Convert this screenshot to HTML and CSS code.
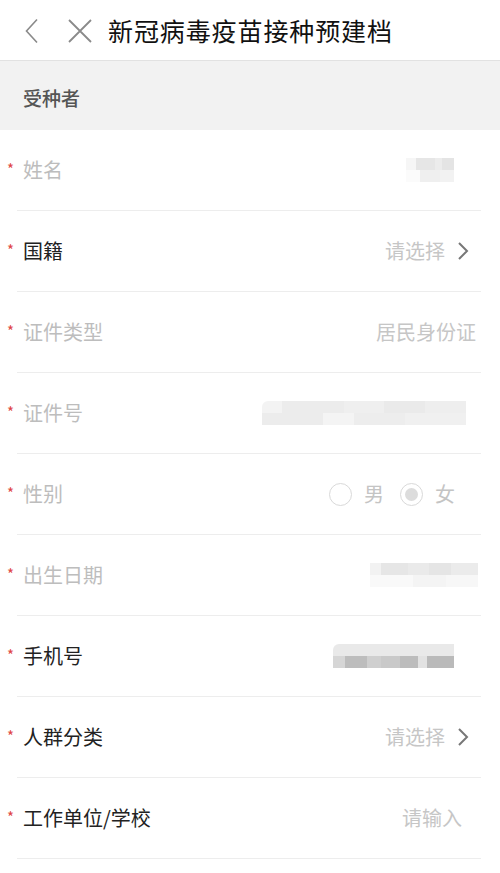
FILE: index.html
```html
<!DOCTYPE html>
<html lang="zh-CN">
<head>
<meta charset="utf-8">
<title>新冠病毒疫苗接种预建档</title>
<link rel="stylesheet" href="styles.css">
</head>
<body>
<header class="topbar">
  <svg class="icon-back" width="16" height="26" viewBox="0 0 16 26"><path d="M13 1.5 L2.5 13 L13 24.5" fill="none" stroke="#8a8a8a" stroke-width="1.6"/></svg>
  <svg class="icon-close" width="26" height="26" viewBox="0 0 26 26"><path d="M2 2 L24 24 M24 2 L2 24" fill="none" stroke="#8a8a8a" stroke-width="1.8"/></svg>
  <h1 class="title">新冠病毒疫苗接种预建档</h1>
</header>
<div class="section">受种者</div>
<div class="form">
  <div class="row">
    <span class="star">*</span>
    <div class="field">
      <span class="label disabled">姓名</span>
      <span class="blur blur-name"><i class="b1"></i><i class="b2"></i></span>
    </div>
  </div>
  <div class="row">
    <span class="star">*</span>
    <div class="field">
      <span class="label">国籍</span>
      <span class="value select">请选择<svg class="chev" width="12" height="20" viewBox="0 0 12 20"><path d="M2 2 L10 10 L2 18" fill="none" stroke="#777" stroke-width="2"/></svg></span>
    </div>
  </div>
  <div class="row">
    <span class="star">*</span>
    <div class="field">
      <span class="label disabled">证件类型</span>
      <span class="value plain">居民身份证</span>
    </div>
  </div>
  <div class="row">
    <span class="star">*</span>
    <div class="field">
      <span class="label disabled">证件号</span>
      <span class="blur blur-id"><i class="b1"></i><i class="b2"></i></span>
    </div>
  </div>
  <div class="row">
    <span class="star">*</span>
    <div class="field">
      <span class="label disabled">性别</span>
      <span class="radios">
        <span class="radio"><span class="circle"></span>男</span>
        <span class="radio"><span class="circle checked"></span>女</span>
      </span>
    </div>
  </div>
  <div class="row">
    <span class="star">*</span>
    <div class="field">
      <span class="label disabled">出生日期</span>
      <span class="blur blur-date"><i class="b1"></i><i class="b2"></i></span>
    </div>
  </div>
  <div class="row">
    <span class="star">*</span>
    <div class="field">
      <span class="label">手机号</span>
      <span class="blur blur-phone"><i class="b1"></i><i class="b2"></i></span>
    </div>
  </div>
  <div class="row">
    <span class="star">*</span>
    <div class="field">
      <span class="label">人群分类</span>
      <span class="value select">请选择<svg class="chev" width="12" height="20" viewBox="0 0 12 20"><path d="M2 2 L10 10 L2 18" fill="none" stroke="#777" stroke-width="2"/></svg></span>
    </div>
  </div>
  <div class="row">
    <span class="star">*</span>
    <div class="field">
      <span class="label">工作单位/学校</span>
      <span class="value input">请输入</span>
    </div>
  </div>
</div>
</body>
</html>
```
FILE: styles.css
```css
* { box-sizing: border-box; }
body {
  margin: 0;
  background: #fff;
  font-family: "Noto Sans CJK SC", "Noto Sans", sans-serif;
  color: #222;
}
.topbar {
  height: 61px;
  border-bottom: 1px solid #e2e2e2;
  display: flex;
  align-items: center;
  padding-left: 24px;
}
.icon-back { margin-right: 27px; margin-top: 2px; }
.icon-close { margin-right: 15px; margin-top: 1px; }
.title {
  margin: 0;
  font-size: 25px;
  font-weight: 400;
  color: #111;
  letter-spacing: 0.9px;
  line-height: 1;
}
.section {
  height: 69px;
  background: #f2f2f2;
  display: flex;
  align-items: center;
  padding-left: 23px;
  font-size: 19px;
  font-weight: 500;
  color: #555;
  padding-top: 3px;
}
.row {
  display: flex;
  height: 81px;
}
.star {
  width: 17px;
  padding-left: 7px;
  color: #e04545;
  font-size: 15px;
  line-height: 1;
  align-self: center;
  margin-top: -5px;
}
.field {
  flex: 1;
  margin-right: 19px;
  border-bottom: 1px solid #ededed;
  display: flex;
  align-items: center;
  justify-content: space-between;
  padding-left: 6px;
}
.label {
  font-size: 20px;
  color: #222;
  line-height: 1;
}
.label.disabled { color: #bdbdbd; }
.value {
  font-size: 20px;
  color: #c6c6c6;
  line-height: 1;
  display: flex;
  align-items: center;
}
.value.select { margin-right: 12px; }
.chev { margin-left: 12px; }
.value.plain { margin-right: 5px; }
.value.input { margin-right: 19px; }
.radios {
  display: flex;
  align-items: center;
  margin-right: 26px;
  font-size: 20px;
  color: #c4c4c4;
  line-height: 1;
}
.radio { display: flex; align-items: center; }
.radio + .radio { margin-left: 16px; }
.circle {
  width: 23px;
  height: 23px;
  border: 1.6px solid #d9d9d9;
  border-radius: 50%;
  margin-right: 12px;
  display: flex;
  align-items: center;
  justify-content: center;
}
.circle.checked::after {
  content: "";
  width: 13px;
  height: 13px;
  border-radius: 50%;
  background: #dcdcdc;
}
.blur {
  display: flex;
  flex-direction: column;
  height: 24px;
}
.blur i { display: block; flex: 1; }
.blur-name { width: 48px; margin-right: 27px; }
.blur-name .b1 { background: linear-gradient(90deg, #f6f6f6 0 20%, #e6e6e6 20% 60%, #ececec 60% 75%, #e4e4e4 75%); }
.blur-name .b2 { background: linear-gradient(90deg, #fbfbfb 0 30%, #efefef 30% 70%, #f2f2f2 70%); }
.blur-id { width: 204px; margin-right: 15px; }
.blur-id .b1 { background: linear-gradient(90deg, #f3f3f3 0 10%, #ececec 10% 40%, #efefef 40% 60%, #eaeaea 60% 80%, #eeeeee 80%); border-radius: 6px 0 0 0; }
.blur-id .b2 { background: linear-gradient(90deg, #ececec 0 30%, #f4f4f4 30% 45%, #ededed 45% 70%, #f0f0f0 70%); }
.blur-date { width: 108px; margin-right: 3px; }
.blur-date .b1 { background: linear-gradient(90deg, #f2f2f2 0 10%, #e6e6e6 10% 35%, #eaeaea 35% 55%, #e5e5e5 55% 75%, #ebebeb 75%); }
.blur-date .b2 { background: linear-gradient(90deg, #f9f9f9 0 40%, #f4f4f4 40% 70%, #f7f7f7 70%); }
.blur-phone { width: 121px; margin-right: 27px; }
.blur-phone .b1 { background: #e9e9e9; border-radius: 6px 0 0 0; }
.blur-phone .b2 { background: linear-gradient(90deg, #d6d6d6 0 10%, #bdbdbd 10% 28%, #cfcfcf 28% 40%, #c9c9c9 40% 55%, #bcbcbc 55% 70%, #e2e2e2 70% 78%, #bababa 78%); }
```
